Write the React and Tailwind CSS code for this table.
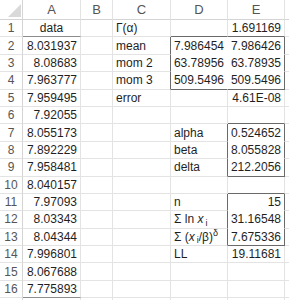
import React from "react";

const colLetters = ["A", "B", "C", "D", "E", ""];

const aData = [
  "data",
  "8.031937",
  "8.08683",
  "7.963777",
  "7.959495",
  "7.92055",
  "8.055173",
  "7.892229",
  "7.958481",
  "8.040157",
  "7.97093",
  "8.03343",
  "8.04344",
  "7.996801",
  "8.067688",
  "7.775893",
  "",
];

// text cells for columns C, D, E (row number -> value)
const cData = { 1: "Γ(α)", 2: "mean", 3: "mom 2", 4: "mom 3", 5: "error" };
const dData = {
  2: "7.986454",
  3: "63.78956",
  4: "509.5496",
  7: "alpha",
  8: "beta",
  9: "delta",
  11: "n",
  12: (
    <span>
      Σ ln <i>x</i>
      <sub className="ml-[2px]">i</sub>
    </span>
  ),
  13: (
    <span>
      Σ (<i>x</i>
      <sub className="ml-[2px]">i</sub>/β)<sup>δ</sup>
    </span>
  ),
  14: "LL",
};
const eData = {
  1: "1.691169",
  2: "7.986426",
  3: "63.78935",
  4: "509.5496",
  5: "4.61E-08",
  7: "0.524652",
  8: "8.055828",
  9: "212.2056",
  11: "15",
  12: "31.16548",
  13: "7.675336",
  14: "19.11681",
};

// which cells are labels (left aligned)
const isLabel = (r, c) => c === 2 || (c === 3 && r >= 7);

function rightBorder(r, c) {
  if (r >= 2 && r <= 4) {
    if (c === 2 || c === 4) return "border-r-[#6a6a6a]";
    if (c === 3) return "border-r-white";
  }
  if ((r >= 7 && r <= 9) || (r >= 11 && r <= 13)) {
    if (c === 3 || c === 4) return "border-r-[#6a6a6a]";
  }
  return "border-r-[#e3e3e3]";
}

function bottomBorder(r, c) {
  if (r === 1 && c === 0) return "border-b-[#8c8c8c]";
  if (r === 16 && c === 0) return "border-b-[#8c8c8c]";
  if ((r === 1 || r === 4) && (c === 3 || c === 4)) return "border-b-[#6a6a6a]";
  if ((r === 2 || r === 3) && (c === 3 || c === 4)) return "border-b-white";
  if ((r === 6 || r === 9 || r === 10 || r === 13) && c === 4)
    return "border-b-[#6a6a6a]";
  if ((r === 7 || r === 8 || r === 11 || r === 12) && c === 4)
    return "border-b-white";
  return "border-b-[#e3e3e3]";
}

function cellValue(r, c) {
  if (c === 0) return aData[r - 1];
  if (c === 2) return cData[r];
  if (c === 3) return dData[r];
  if (c === 4) return eData[r];
  return null;
}

function Cell({ r, c }) {
  const value = cellValue(r, c);
  let align = "justify-end";
  if (isLabel(r, c)) align = "justify-start";
  if (r === 1 && c === 0) align = "justify-center";
  return (
    <div
      className={`h-[17.4px] flex items-center px-[3px] bg-white border-r border-b whitespace-nowrap overflow-visible ${align} ${rightBorder(
        r,
        c
      )} ${bottomBorder(r, c)}`}
    >
      {value}
    </div>
  );
}

export default function App() {
  const rows = [];
  for (let r = 1; r <= 17; r++) rows.push(r);

  return (
    <div className="w-[289px] h-[300px] overflow-hidden bg-white font-['Liberation_Sans',Arial,sans-serif] text-[12px] text-[#1f1f1f] leading-none">
      <div className="grid grid-cols-[23px_58px_32px_58px_57px_57px_1fr]">
        {/* header row */}
        <div className="h-[20px] relative border-r border-b border-[#d4d4d4] bg-white">
          <svg
            className="absolute left-0 top-0"
            width="23"
            height="19"
            viewBox="0 0 23 19"
          >
            <polygon points="21,4 21,17 8,17" fill="#d9d9d9" />
          </svg>
        </div>
        {colLetters.map((l, i) => (
          <div
            key={i}
            className="h-[20px] flex items-center justify-center border-r border-b border-r-[#e3e3e3] border-b-[#d4d4d4] bg-white text-[13px] text-[#555555]"
          >
            {l}
          </div>
        ))}

        {rows.map((r) => (
          <React.Fragment key={r}>
            <div className="h-[17.4px] flex items-center justify-center border-r border-b border-r-[#d4d4d4] border-b-[#e3e3e3] text-[12px] text-[#555555]">
              {r <= 16 ? r : ""}
            </div>
            {[0, 1, 2, 3, 4, 5].map((c) => (
              <Cell key={c} r={r} c={c} />
            ))}
          </React.Fragment>
        ))}
      </div>
    </div>
  );
}
